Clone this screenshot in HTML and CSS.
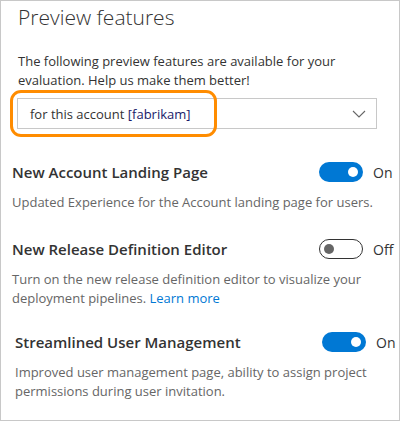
FILE: index.html
```html
<!DOCTYPE html>
<html>
<head>
<meta charset="utf-8">
<link rel="stylesheet" href="styles.css">
</head>
<body>
<div class="panel">
  <h1 class="title">Preview features</h1>
  <p class="intro">The following preview features are available for your evaluation. Help us make them better!</p>
  <div class="select-wrap">
    <div class="select">
      <span class="select-text">for this account <span class="acct">[fabrikam]</span></span>
      <svg class="chev" width="14" height="8" viewBox="0 0 14 8"><path d="M1 1 L7 7 L13 1" fill="none" stroke="#666" stroke-width="1.1"/></svg>
    </div>
    <div class="highlight"></div>
  </div>

  <div class="feature">
    <div class="feature-head">
      <span class="feature-name">New Account Landing Page</span>
      <span class="toggle-group"><span class="toggle on"><span class="knob"></span></span><span class="state">On</span></span>
    </div>
    <p class="desc">Updated Experience for the Account landing page for users.</p>
  </div>

  <div class="feature">
    <div class="feature-head">
      <span class="feature-name">New Release Definition Editor</span>
      <span class="toggle-group"><span class="toggle off"><span class="knob"></span></span><span class="state">Off</span></span>
    </div>
    <p class="desc">Turn on the new release definition editor to visualize your deployment pipelines. <a class="link" href="#">Learn more</a></p>
  </div>

  <div class="feature shifted">
    <div class="feature-head">
      <span class="feature-name">Streamlined User Management</span>
      <span class="toggle-group"><span class="toggle on"><span class="knob"></span></span><span class="state">On</span></span>
    </div>
    <p class="desc">Improved user management page, ability to assign project permissions during user invitation.</p>
  </div>
</div>
</body>
</html>
```
FILE: styles.css
```css
html, body {
  margin: 0;
  padding: 0;
  background: #fff;
}
.panel {
  width: 400px;
  height: 421px;
  box-sizing: border-box;
  border: 1px solid #c8c8c8;
  font-family: "Open Sans", "Noto Sans", sans-serif;
  color: #333;
  padding: 0 8px 0 11px;
}
.title {
  margin: 0 0 0 6px;
  font-size: 21px;
  font-weight: 300;
  line-height: 28px;
  padding-top: 2px;
  color: #333;
}
.intro {
  margin: 21px 13px 0 6px;
  font-size: 13px;
  line-height: 19px;
  color: #333;
}
.select-wrap {
  position: relative;
  margin: 8px 14px 0 5px;
}
.select {
  height: 31px;
  box-sizing: border-box;
  border: 1px solid #c8c8c8;
  display: flex;
  align-items: center;
  justify-content: space-between;
  padding: 0 10px 0 12px;
  font-size: 13px;
}
.acct {
  color: #1a1a6a;
}
.highlight {
  position: absolute;
  left: -7px;
  top: -8px;
  width: 207px;
  height: 47px;
  box-sizing: border-box;
  border: 3px solid #ff8c00;
  border-radius: 11px;
}
.feature {
  margin-top: 32px;
}
.feature + .feature {
  margin-top: 26px;
}
.feature.shifted {
  margin-top: 23px;
  margin-left: 3px;
  margin-right: -3px;
}
.feature-head {
  display: flex;
  align-items: center;
  justify-content: space-between;
  height: 22px;
}
.feature-name {
  font-size: 15px;
  font-weight: 600;
  color: #333;
}
.toggle-group {
  display: flex;
  align-items: center;
  width: 72px;
  flex: none;
}
.toggle {
  width: 44px;
  height: 20px;
  box-sizing: border-box;
  border-radius: 10px;
  display: flex;
  align-items: center;
  flex: none;
}
.toggle.on {
  background: #0078d4;
  justify-content: flex-end;
  padding-right: 5px;
}
.toggle.off {
  border: 1px solid #333;
  background: #fff;
  padding-left: 4px;
}
.knob {
  width: 10px;
  height: 10px;
  border-radius: 50%;
  background: #fff;
}
.toggle.off .knob {
  background: #666;
}
.state {
  margin-left: 10px;
  font-size: 14px;
  color: #333;
}
.desc {
  margin: 10px 0 0;
  font-size: 13px;
  line-height: 19px;
  color: #666;
}
.link {
  color: #0078d4;
  text-decoration: none;
}
```
